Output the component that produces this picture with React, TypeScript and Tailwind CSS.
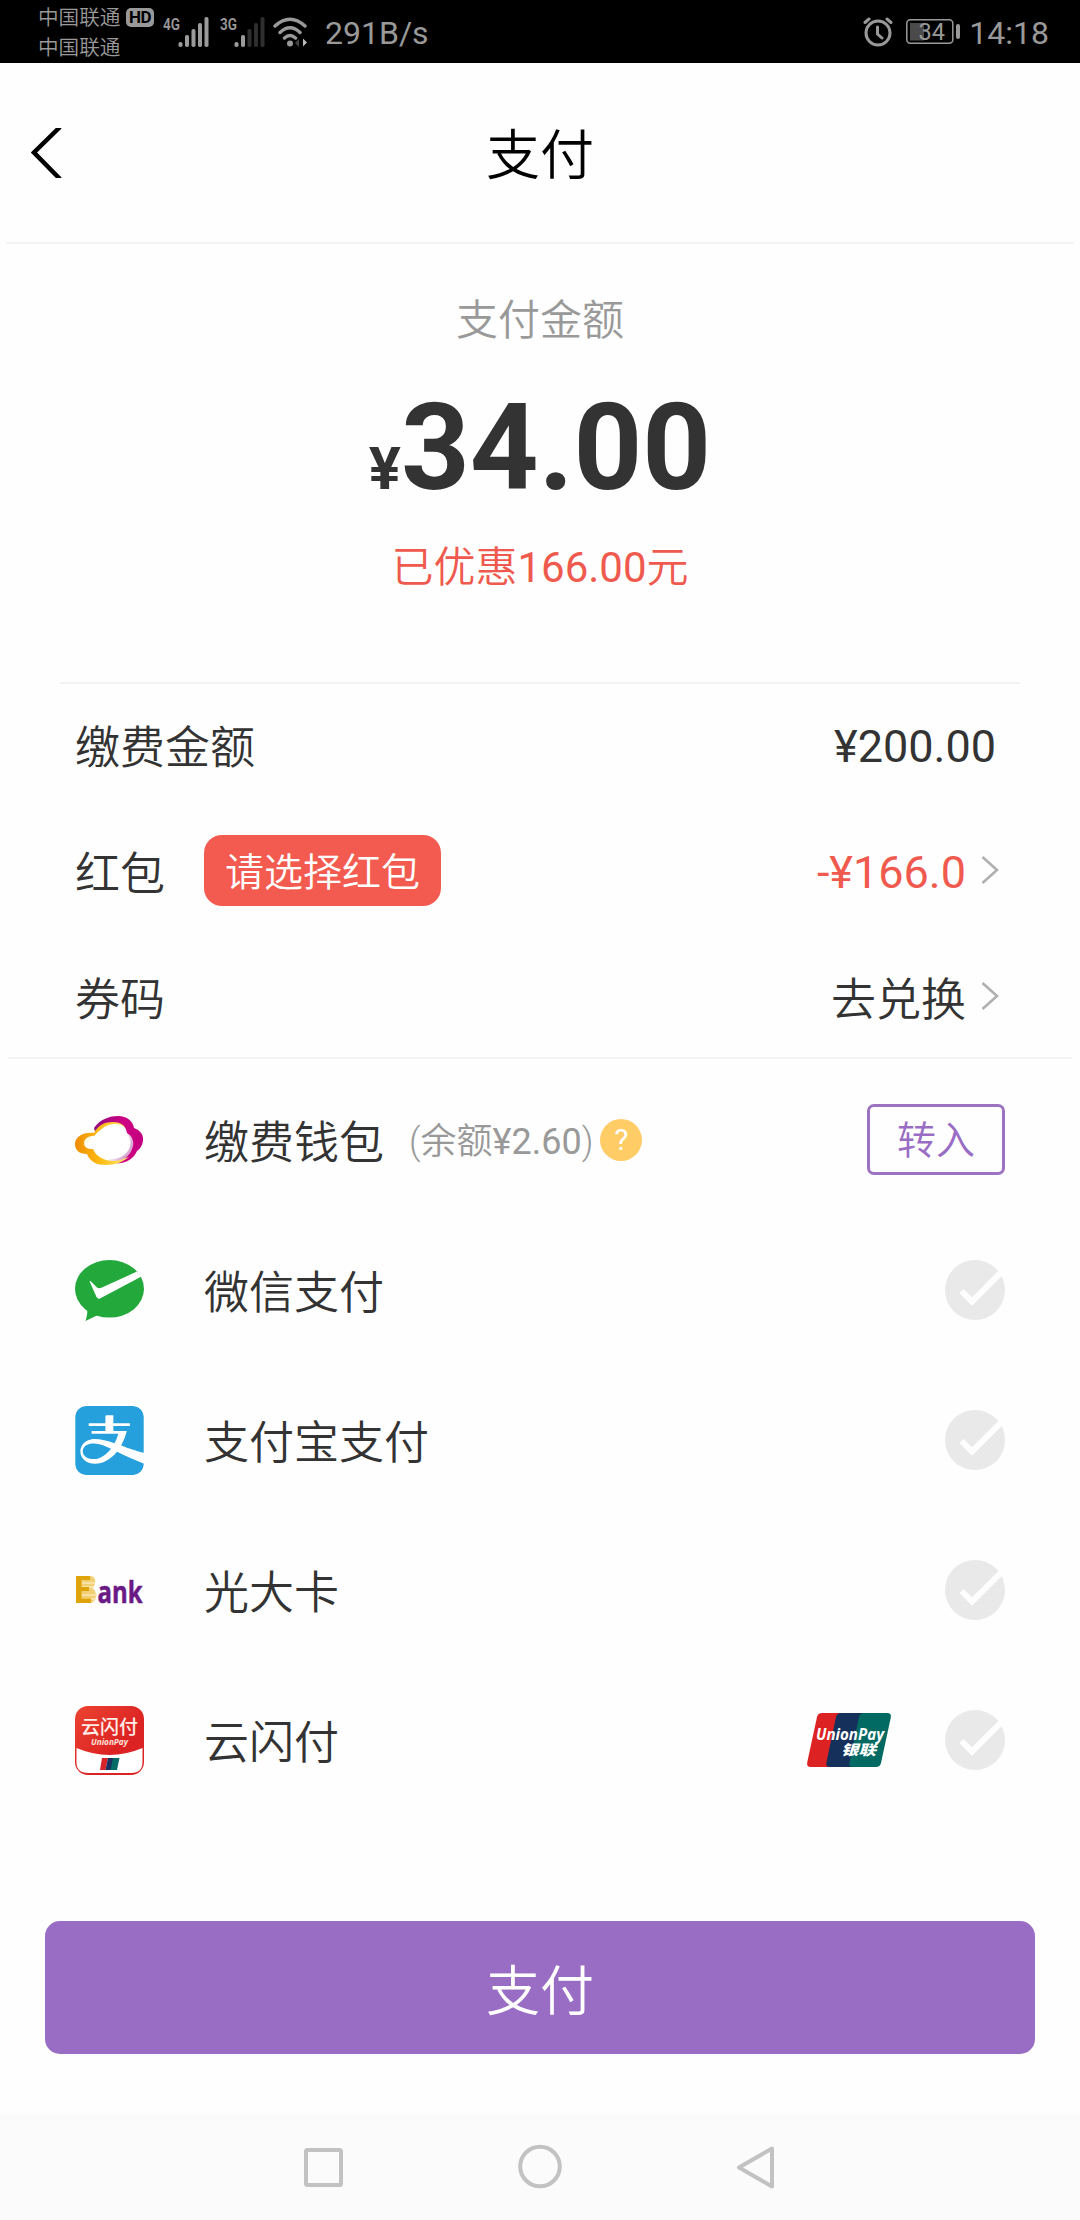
import type { ReactNode } from "react";
import { SiAlipay } from "react-icons/si";

const Chevron = () => (
  <svg className="-mt-[6px] ml-[15px] h-[30px] w-[18px]" viewBox="0 0 18 30" fill="none" stroke="#b0b0b0" strokeWidth="2.6">
    <path d="M1.5 2 16 15 1.5 28" />
  </svg>
);

const CheckCircle = () => (
  <svg className="size-[60px]" viewBox="0 0 60 60">
    <circle cx="30" cy="30" r="30" fill="#e9e9e9" />
    <path d="M16.5 31 27 41.5 58 10.5" fill="none" stroke="#fefefe" strokeWidth="6" />
  </svg>
);

const WalletLogo = () => (
  <svg className="h-[49px] w-[69px]" viewBox="0 0 69 49">
    <defs>
      <linearGradient id="magenta" x1="0" x2="1" y1="0" y2="0">
        <stop offset="0" stopColor="#8f0d82" />
        <stop offset="0.6" stopColor="#cf0083" />
        <stop offset="1" stopColor="#c2007f" />
      </linearGradient>
      <linearGradient id="gold" x1="0" x2="1" y1="0" y2="0">
        <stop offset="0" stopColor="#ee8d00" />
        <stop offset="0.45" stopColor="#fdb913" />
        <stop offset="1" stopColor="#fff06a" />
      </linearGradient>
      <linearGradient id="inner" x1="0" x2="1" y1="0" y2="0.5">
        <stop offset="0" stopColor="#ffe680" />
        <stop offset="0.3" stopColor="#ffffff" />
        <stop offset="0.75" stopColor="#ffffff" />
        <stop offset="1" stopColor="#d9a9d3" />
      </linearGradient>
    </defs>
    <path d="M19 12C25 3 35 0 43 0c9 0 15 5 16 12 6 2 10 7 9 13-1 5-3 8-6 10-3 7-9 11-16 12-8 1-14-1-18-4Z" fill="url(#magenta)" />
    <path d="M51 14C50 9 45 6 38 6 30 6 23 9 19 17 8 16 0 21 0 28c0 6 4 10 12 10 3 8 10 11 19 11 9 0 17-3 23-8-12 4-22 3-28-4-4-4-5-6-4-12Z" fill="url(#gold)" />
    <path d="M21 20C25 13 31 8 40 8c7 0 11 3 12 9 5 3 7 8 6 13-2 9-9 15-19 15-9 0-18-4-21-12-6 0-9-2-9-6 0-5 6-8 12-7Z" fill="url(#inner)" />
    <ellipse cx="36.500" cy="27" rx="19" ry="16" fill="#fff" />
  </svg>
);

const WechatLogo = () => (
  <svg className="h-[61px] w-[69px]" viewBox="0 0 69 61">
    <ellipse cx="34.5" cy="28.8" rx="34.5" ry="28.8" fill="#22a83b" />
    <path d="M12 49c1 4-.5 8-1.500 12L25 54Z" fill="#22a83b" />
    <path d="M14.600 21.500Q15 20.500 16.500 22L22 27.500Q24 29 27 27.500L62 11.500 66.500 16.500 25 38.500Q23 39.500 21.500 37Z" fill="#fff" />
  </svg>
);

const AlipayLogo = () => (
  <span className="flex size-[69px] items-center justify-center overflow-hidden rounded-[11px] bg-white">
    <SiAlipay className="size-[69px] shrink-0 text-[#25a0dc]" />
  </span>
);

const BankLogo = () => (
  <svg className="h-[30px] w-[69px] overflow-visible" viewBox="0 0 69 30">
    <path d="M6 1h10c5 0 6 9 1 12 6 3 5 15-2 15H6Z" fill="#f2cf73" />
    <path d="M7 8h13M7 12h12M7 20h15M7 24h14" stroke="#f9e7b6" strokeWidth="1.300" />
    <path d="M1 1h14v4H6.500v7H14v4H6.500v7.500H16V28H1Z" fill="#dfa30c" />
    <text x="22.500" y="28" textLength="45" lengthAdjust="spacingAndGlyphs" fontSize="31" fontWeight="700" fill="#6a1a84" stroke="#6a1a84" strokeWidth="0.5" className="font-['Open_Sans',sans-serif]">ank</text>
  </svg>
);

const QuickPassLogo = () => (
  <svg className="size-[69px] overflow-visible" viewBox="0 0 69 69">
    <defs>
      <linearGradient id="qp" x1="0" x2="1" y1="0" y2="1">
        <stop offset="0" stopColor="#ec4431" />
        <stop offset="0.6" stopColor="#dc2323" />
      </linearGradient>
    </defs>
    <rect width="69" height="69" rx="13" fill="url(#qp)" />
    <path d="M1.500 42Q34.500 56 67.500 42V56Q67.500 67 56 67H13Q1.500 67 1.500 56Z" fill="#fff" />
    <text x="6" y="27.500" textLength="57" fontSize="19" fontWeight="500" fill="#ffece6" className="font-['Noto_Sans_CJK_SC',sans-serif]">云闪付</text>
    <text x="16" y="39" textLength="37" lengthAdjust="spacingAndGlyphs" fontSize="8.500" fontStyle="italic" fontWeight="700" fill="#ffe0da" className="font-['Open_Sans',sans-serif]">UnionPay</text>
    <path d="M27 52h6l-2.500 12H25Z" fill="#d8232a" />
    <path d="M33 52h6l-2.500 12h-6Z" fill="#1a3260" />
    <path d="M38 52h6.500L42 64h-6.500Z" fill="#056b66" />
  </svg>
);

const UnionPayCard = () => (
  <svg className="mr-[54px] h-[54px] w-[84px] overflow-visible" viewBox="0 0 84 54">
    <path d="M15 0H40L28 54H4Q-1 54 .3 49L10 4Q11 0 15 0Z" fill="#dd2224" />
    <path d="M34 0H62L50 54H23Q18 54 19.500 49L29 4Q30 0 34 0Z" fill="#16305c" />
    <path d="M57 0H80Q85 0 83.700 5L74 50Q73 54 69 54H46Q41 54 42.500 49L52 4Q53 0 57 0Z" fill="#036a63" />
    <text x="9" y="27" textLength="68" lengthAdjust="spacingAndGlyphs" fontSize="16.500" fontStyle="italic" fontWeight="700" fill="#fff" className="font-['Open_Sans',sans-serif]">UnionPay</text>
    <text x="34" y="42" textLength="35" lengthAdjust="spacingAndGlyphs" fontSize="14" fontStyle="italic" fontWeight="900" fill="#fff" className="font-['Noto_Sans_CJK_SC',sans-serif]">银联</text>
  </svg>
);

const Signal = ({ level }: { level: number }) => (
  <svg className="h-[30px] w-[32px]" viewBox="0 0 32 30">
    {[5, 12, 18, 24, 30].map((h, i) => (
      <rect key={h} x={0.5 + i * 6.5} y={30 - h} width="4" height={h} rx="1.8" fill={i < level ? "#9b9b9b" : "#2e2e2e"} />
    ))}
  </svg>
);

function StatusBar() {
  return (
    <div className="flex h-[63px] shrink-0 items-start bg-black text-[#999]">
      <div className="ml-[38px] flex w-[88px] flex-col font-[350]">
        <span className="mt-[3px] h-[30px] text-[20.6px] leading-[30px] whitespace-nowrap">中国联通</span>
        <span className="h-[30px] text-[20.6px] leading-[30px] whitespace-nowrap">中国联通</span>
      </div>
      <div className="mt-[8px] flex h-[19px] w-[28px] items-center justify-center rounded-[5px] bg-[#999] text-[17px] leading-none font-bold tracking-tight text-black">HD</div>
      <span className="mt-[15px] ml-[9px] w-[15px] origin-left scale-x-80 text-[17px] leading-[18px] font-semibold">4G</span>
      <div className="mt-[17px]"><Signal level={5} /></div>
      <span className="mt-[15px] ml-[10px] w-[14px] origin-left scale-x-80 text-[17px] leading-[18px] font-semibold">3G</span>
      <div className="mt-[17px]"><Signal level={2} /></div>
      <svg className="mt-[17px] ml-[7px] h-[30px] w-[35px]" viewBox="0 0 35 30" fill="none" stroke="#999" strokeWidth="3.400" strokeLinecap="round">
        <path d="M2 9Q17 -4.500 32 9M7 15.500Q17 6 27 15.500M11.500 21Q17 16 22.500 21" />
        <circle cx="17" cy="26.500" r="3" fill="#999" stroke="none" />
        <path d="M26 22v8l-4-4Z" fill="#444" stroke="none" />
        <path d="M30 21.500v8l4-4Z" fill="#bbb" stroke="none" />
      </svg>
      <span className="mt-[14px] ml-[17px] text-[32px] leading-[38px]">291B/s</span>
      <svg className="mt-[17px] ml-auto h-[30px] w-[30px]" viewBox="0 0 30 30" fill="none" stroke="#999" strokeWidth="3" strokeLinecap="round">
        <circle cx="15" cy="16" r="12" />
        <path d="M14.500 10v7l4.500 4M2 5.500 6 2M28 5.500 24 2" />
      </svg>
      <svg className="mt-[19px] ml-[13px] h-[25px] w-[54px] overflow-visible" viewBox="0 0 54 25">
        <rect x="0.800" y="0.800" width="46" height="23.400" rx="3.500" fill="none" stroke="#999" strokeWidth="1.500" />
        <rect x="4" y="4" width="14" height="17.500" fill="#4a4a4a" />
        <rect x="50" y="5" width="4" height="15" rx="2" fill="#999" />
        <text x="12.500" y="21" fontSize="23.500" fill="#999">34</text>
      </svg>
      <span className="mt-[14px] mr-[31px] ml-[9px] text-[32px] leading-[38px]">14:18</span>
    </div>
  );
}

const Row = ({ label, children }: { label: ReactNode; children: ReactNode }) => (
  <div className="flex h-[126px] items-center pr-[81px] pl-[75px] text-[45px] text-[#333]">
    <div className="flex items-center font-[350]">{label}</div>
    <div className="ml-auto flex items-center">{children}</div>
  </div>
);

const Method = ({ logo, name, note, children }: { logo: ReactNode; name: string; note?: ReactNode; children: ReactNode }) => (
  <div className="flex h-[150px] items-center pr-[75px] pl-[75px] text-[#333]">
    <div className="flex w-[129px] shrink-0 items-center">{logo}</div>
    <span className="mt-[7px] text-[45px] leading-[60px] font-[350]">{name}</span>
    {note}
    <div className="ml-auto flex items-center">{children}</div>
  </div>
);

export default function App() {
  return (
    <div className="flex h-[2220px] w-[1080px] flex-col overflow-hidden bg-[#fefefe] font-['Roboto','Noto_Sans_CJK_SC',sans-serif]">
      <StatusBar />
      <header className="mx-[6px] flex h-[181px] shrink-0 items-center border-b-2 border-[#f3f3f3]">
        <svg className="ml-[25px] h-[50px] w-[32px]" viewBox="0 0 32 50" fill="none" stroke="#000" strokeWidth="4.500">
          <path d="M29 -1 3 24.500 29 51" />
        </svg>
        <h1 className="mt-[9px] flex-1 pr-[57px] text-center text-[54px] leading-[70px] font-[350] text-black">支付</h1>
      </header>

      <section className="mx-[60px] flex h-[440px] shrink-0 flex-col items-center border-b-2 border-[#f3f3f3]">
        <p className="mt-[47px] text-[42px] leading-[60px] font-[350] text-[#999]">支付金额</p>
        <p className="mt-[27px] flex items-baseline text-[120px] leading-[140px] font-bold text-[#333]">
          <span className="text-[60px]">¥</span>34.00
        </p>
        <p className="-mt-px text-[42px] leading-[60px] text-[#f0594d]">
          <span className="font-[350]">已优惠</span>166.00<span className="font-[350]">元</span>
        </p>
      </section>

      <section className="h-[374px] w-full shrink-0">
        <Row label={<span className="mt-[3px]">缴费金额</span>}><span className="mr-[3px]">¥200.00</span></Row>
        <Row
          label={
            <>
              <span className="mt-[3px]">红包</span>
              <span className="-mt-[5px] ml-[39px] flex h-[71px] w-[237px] items-center justify-center rounded-[18px] bg-[#f45b50] pt-[5px] text-[39px] text-white">请选择红包</span>
            </>
          }
        >
          <span className="text-[#f0594d]">-¥166.0</span><Chevron />
        </Row>
        <Row label={<span className="mt-[3px]">券码</span>}><span className="mt-[3px] font-[350]">去兑换</span><Chevron /></Row>
      </section>
      <div className="mx-[8px] -mt-px h-[2px] shrink-0 bg-[#f3f3f3]" />

      <section className="mt-[6px] shrink-0">
        <Method
          logo={<WalletLogo />}
          name="缴费钱包"
          note={
            <>
              <span className="mt-[4px] ml-[25px] text-[36px] leading-[50px] font-[350] text-[#999]">
                (余额<span className="font-normal">¥2.60</span>)
              </span>
              <span className="-mt-px ml-[7px] flex size-[42px] items-center justify-center rounded-full bg-[#ffcc66] text-[30px] leading-none text-white">?</span>
            </>
          }
        >
          <button className="-mt-[2px] flex h-[71px] w-[138px] items-center justify-center rounded-[7px] border-3 border-[#9b73c0] pt-[4px] text-[39px] font-[350] text-[#996dc4]">转入</button>
        </Method>
        <Method logo={<WechatLogo />} name="微信支付"><CheckCircle /></Method>
        <Method logo={<AlipayLogo />} name="支付宝支付"><CheckCircle /></Method>
        <Method logo={<BankLogo />} name="光大卡"><CheckCircle /></Method>
        <Method logo={<QuickPassLogo />} name="云闪付"><UnionPayCard /><CheckCircle /></Method>
      </section>

      <button className="mx-[45px] mt-[106px] flex h-[133px] shrink-0 items-center justify-center rounded-[15px] bg-[#996dc4] pt-[10px] text-[54px] font-[350] text-white">支付</button>

      <nav className="mt-auto flex h-[106px] shrink-0 items-start justify-center bg-[#fbfbfb]">
        <svg className="mt-[30px] h-[46px] w-[474px]" viewBox="0 0 474 46" fill="none" stroke="#c2c2c2" strokeWidth="4">
          <rect x="3" y="6" width="35" height="35" rx="1.500" />
          <circle cx="237" cy="22.500" r="19.800" />
          <path d="M469 4.500 436 23.500 469 42.500Z" strokeLinejoin="round" />
        </svg>
      </nav>
    </div>
  );
}
